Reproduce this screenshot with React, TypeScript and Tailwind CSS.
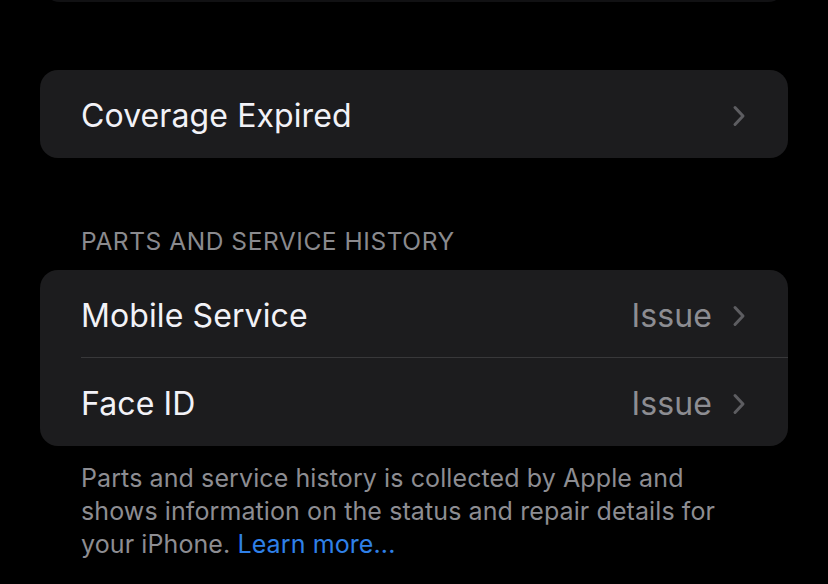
import React from 'react';

const Chevron = () => (
  <svg width="14" height="24" viewBox="0 0 14 24" fill="none" className="shrink-0">
    <path d="M3 3.5 L11 12 L3 20.5" stroke="#5d5d61" strokeWidth="3" strokeLinecap="round" strokeLinejoin="round" />
  </svg>
);

const Row = ({ label, value, divider }: { label: string; value?: string; divider?: boolean }) => (
  <div className="flex h-[88px] items-center pl-[41px]">
    <div className={`flex h-full flex-1 items-center pt-[4px] pr-[42px] ${divider ? 'border-b border-[#38383a]' : ''}`}>
      <span className="flex-1 text-[32px] text-[#f2f2f7]">{label}</span>
      {value && <span className="mr-[20px] text-[32px] text-[#8d8d92]">{value}</span>}
      <Chevron />
    </div>
  </div>
);

export default function App() {
  return (
    <div className="h-[584px] w-[828px] overflow-hidden bg-black font-['Inter',sans-serif] tracking-[0.1px]">
      {/* previous card edge */}
      <div className="mx-[42px] -mt-[20px] h-[22px] rounded-b-[18px] bg-[#111113]" />

      <div className="mx-[40px] mt-[68px] overflow-hidden rounded-[18px] bg-[#1c1c1e]">
        <Row label="Coverage Expired" />
      </div>

      <div className="mt-[70px] pl-[81px] text-[24.5px] leading-[26px] tracking-[0.55px] text-[#8a8a8e]">PARTS AND SERVICE HISTORY</div>

      <div className="mx-[40px] mt-[16px] overflow-hidden rounded-[18px] bg-[#1c1c1e]">
        <Row label="Mobile Service" value="Issue" divider />
        <Row label="Face ID" value="Issue" />
      </div>

      <p className="mt-[16px] pl-[81px] pr-[80px] text-[25px] leading-[33px] text-[#8d8d92]">
        Parts and service history is collected by Apple and shows information on the status and repair details for your iPhone.{' '}
        <span className="text-[#2f80e8]">Learn more...</span>
      </p>
    </div>
  );
}
